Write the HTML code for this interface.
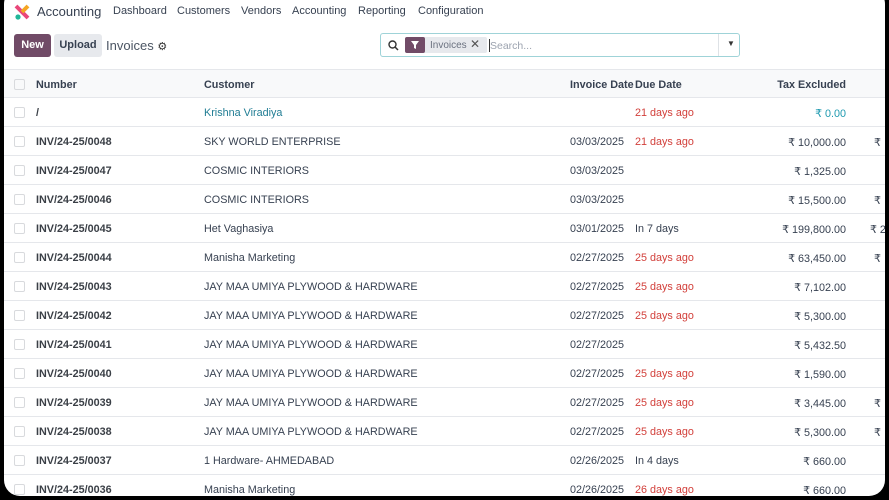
<!DOCTYPE html>
<html><head><meta charset="utf-8"><style>
*{box-sizing:border-box;margin:0;padding:0}
body{width:889px;height:500px;background:#000;overflow:hidden;font-family:"Liberation Sans",sans-serif;position:relative}
.page{position:absolute;left:4px;top:-12px;width:881px;height:508px;background:#fff;border-radius:16px;overflow:hidden}
.in{position:absolute;left:-4px;top:12px;width:889px;height:500px}
.nav{position:absolute;top:5px;font-size:11px;color:#374151}
.btn{position:absolute;top:34px;height:23px;border-radius:3px;font-size:11px;font-weight:bold;line-height:23px;text-align:center}
.row{position:absolute;left:4px;width:881px;height:29px;border-bottom:1px solid #e5e7eb;font-size:10.8px;color:#374151}
.row span{position:absolute;top:9px;white-space:nowrap}
.row span.n{font-weight:bold;color:#3a3f46}
.cb{position:absolute;left:10px;top:9px;width:11px;height:11px;border:1px solid #d8dadd;border-radius:2px}
.r{text-align:right}
.red{color:#d23f3a}
</style></head><body>
<div class="page"><div class="in">
<svg style="position:absolute;left:14px;top:4px" width="16" height="16" viewBox="0 0 16 16"><path d="M2 2 L14 14" stroke="#e9477a" stroke-width="4"/><path d="M14 2 L8 8" stroke="#f5a623" stroke-width="4"/><circle cx="4" cy="13" r="2.6" fill="#21b799"/></svg>
<div class="nav" style="left:37px;font-size:13px;top:4px">Accounting</div>
<div class="nav" style="left:113px">Dashboard</div>
<div class="nav" style="left:177px">Customers</div>
<div class="nav" style="left:241px">Vendors</div>
<div class="nav" style="left:292px">Accounting</div>
<div class="nav" style="left:358px">Reporting</div>
<div class="nav" style="left:418px">Configuration</div>
<div class="btn" style="left:14px;width:37px;background:#714b67;color:#fff">New</div>
<div class="btn" style="left:54px;width:48px;background:#e7e9ed;color:#374151">Upload</div>
<div style="position:absolute;left:106px;top:38px;font-size:13px;color:#4b5563">Invoices <span style="font-size:11px;color:#333">⚙</span></div>
<div style="position:absolute;left:380px;top:33px;width:360px;height:24px;border:1px solid #9fd3d8;border-radius:3px">
<svg style="position:absolute;left:7px;top:6px" width="11" height="11" viewBox="0 0 11 11"><circle cx="4.5" cy="4.5" r="3.5" fill="none" stroke="#333" stroke-width="1.4"/><path d="M7 7 L10 10" stroke="#333" stroke-width="1.5"/></svg>
<div style="position:absolute;left:24px;top:3px;height:16px;width:82px;background:#e7e9ed;border-radius:2px"></div>
<div style="position:absolute;left:24px;top:3px;height:16px;width:20px;background:#714b67;border-radius:2px"></div>
<svg style="position:absolute;left:29px;top:6px" width="10" height="10" viewBox="0 0 10 10"><path d="M1 1 H9 L6 5 V9 L4 8 V5 Z" fill="#fff"/></svg>
<div style="position:absolute;left:49px;top:6px;font-size:10px;color:#6b7280">Invoices</div>
<div style="position:absolute;left:89px;top:3px;font-size:12px;color:#555">✕</div>
<div style="position:absolute;left:108px;top:5px;width:1px;height:13px;background:#333"></div>
<div style="position:absolute;left:109px;top:6px;font-size:10.5px;color:#9ca3af">Search...</div>
<div style="position:absolute;left:337px;top:0;width:1px;height:22px;background:#dee2e6"></div>
<div style="position:absolute;left:346px;top:5px;font-size:8px;color:#333">▼</div>
</div>
<div class="row" style="top:69px;background:#f8f9fa;font-weight:bold;border-top:1px solid #e5e7eb"><div class="cb"></div><span style="left:32px">Number</span><span style="left:200px">Customer</span><span style="left:566px">Invoice Date</span><span style="left:631px">Due Date</span><span class="r" style="right:39px">Tax Excluded</span></div>
<div class="row" style="top:98px"><div class="cb"></div><span class="n" style="left:32px">/</span><span style="left:200px;color:#1f7c93">Krishna Viradiya</span><span class="red" style="left:631px">21 days ago</span><span style="right:39px;color:#1f9ab0">₹ 0.00</span></div>
<div class="row" style="top:127px"><div class="cb"></div><span class="n" style="left:32px">INV/24-25/0048</span><span style="left:200px">SKY WORLD ENTERPRISE</span><span style="left:566px">03/03/2025</span><span class="red" style="left:631px">21 days ago</span><span style="right:39px">₹ 10,000.00</span><span style="left:870px">₹</span></div>
<div class="row" style="top:156px"><div class="cb"></div><span class="n" style="left:32px">INV/24-25/0047</span><span style="left:200px">COSMIC INTERIORS</span><span style="left:566px">03/03/2025</span><span style="right:39px">₹ 1,325.00</span></div>
<div class="row" style="top:185px"><div class="cb"></div><span class="n" style="left:32px">INV/24-25/0046</span><span style="left:200px">COSMIC INTERIORS</span><span style="left:566px">03/03/2025</span><span style="right:39px">₹ 15,500.00</span><span style="left:870px">₹</span></div>
<div class="row" style="top:214px"><div class="cb"></div><span class="n" style="left:32px">INV/24-25/0045</span><span style="left:200px">Het Vaghasiya</span><span style="left:566px">03/01/2025</span><span style="left:631px">In 7 days</span><span style="right:39px">₹ 199,800.00</span><span style="left:866px">₹ 2</span></div>
<div class="row" style="top:243px"><div class="cb"></div><span class="n" style="left:32px">INV/24-25/0044</span><span style="left:200px">Manisha Marketing</span><span style="left:566px">02/27/2025</span><span class="red" style="left:631px">25 days ago</span><span style="right:39px">₹ 63,450.00</span><span style="left:870px">₹</span></div>
<div class="row" style="top:272px"><div class="cb"></div><span class="n" style="left:32px">INV/24-25/0043</span><span style="left:200px">JAY MAA UMIYA PLYWOOD &amp; HARDWARE</span><span style="left:566px">02/27/2025</span><span class="red" style="left:631px">25 days ago</span><span style="right:39px">₹ 7,102.00</span></div>
<div class="row" style="top:301px"><div class="cb"></div><span class="n" style="left:32px">INV/24-25/0042</span><span style="left:200px">JAY MAA UMIYA PLYWOOD &amp; HARDWARE</span><span style="left:566px">02/27/2025</span><span class="red" style="left:631px">25 days ago</span><span style="right:39px">₹ 5,300.00</span></div>
<div class="row" style="top:330px"><div class="cb"></div><span class="n" style="left:32px">INV/24-25/0041</span><span style="left:200px">JAY MAA UMIYA PLYWOOD &amp; HARDWARE</span><span style="left:566px">02/27/2025</span><span style="right:39px">₹ 5,432.50</span></div>
<div class="row" style="top:359px"><div class="cb"></div><span class="n" style="left:32px">INV/24-25/0040</span><span style="left:200px">JAY MAA UMIYA PLYWOOD &amp; HARDWARE</span><span style="left:566px">02/27/2025</span><span class="red" style="left:631px">25 days ago</span><span style="right:39px">₹ 1,590.00</span></div>
<div class="row" style="top:388px"><div class="cb"></div><span class="n" style="left:32px">INV/24-25/0039</span><span style="left:200px">JAY MAA UMIYA PLYWOOD &amp; HARDWARE</span><span style="left:566px">02/27/2025</span><span class="red" style="left:631px">25 days ago</span><span style="right:39px">₹ 3,445.00</span><span style="left:870px">₹</span></div>
<div class="row" style="top:417px"><div class="cb"></div><span class="n" style="left:32px">INV/24-25/0038</span><span style="left:200px">JAY MAA UMIYA PLYWOOD &amp; HARDWARE</span><span style="left:566px">02/27/2025</span><span class="red" style="left:631px">25 days ago</span><span style="right:39px">₹ 5,300.00</span><span style="left:870px">₹</span></div>
<div class="row" style="top:446px"><div class="cb"></div><span class="n" style="left:32px">INV/24-25/0037</span><span style="left:200px">1 Hardware- AHMEDABAD</span><span style="left:566px">02/26/2025</span><span style="left:631px">In 4 days</span><span style="right:39px">₹ 660.00</span></div>
<div class="row" style="top:475px"><div class="cb"></div><span class="n" style="left:32px">INV/24-25/0036</span><span style="left:200px">Manisha Marketing</span><span style="left:566px">02/26/2025</span><span class="red" style="left:631px">26 days ago</span><span style="right:39px">₹ 660.00</span></div>
</div></div>
</body></html>
